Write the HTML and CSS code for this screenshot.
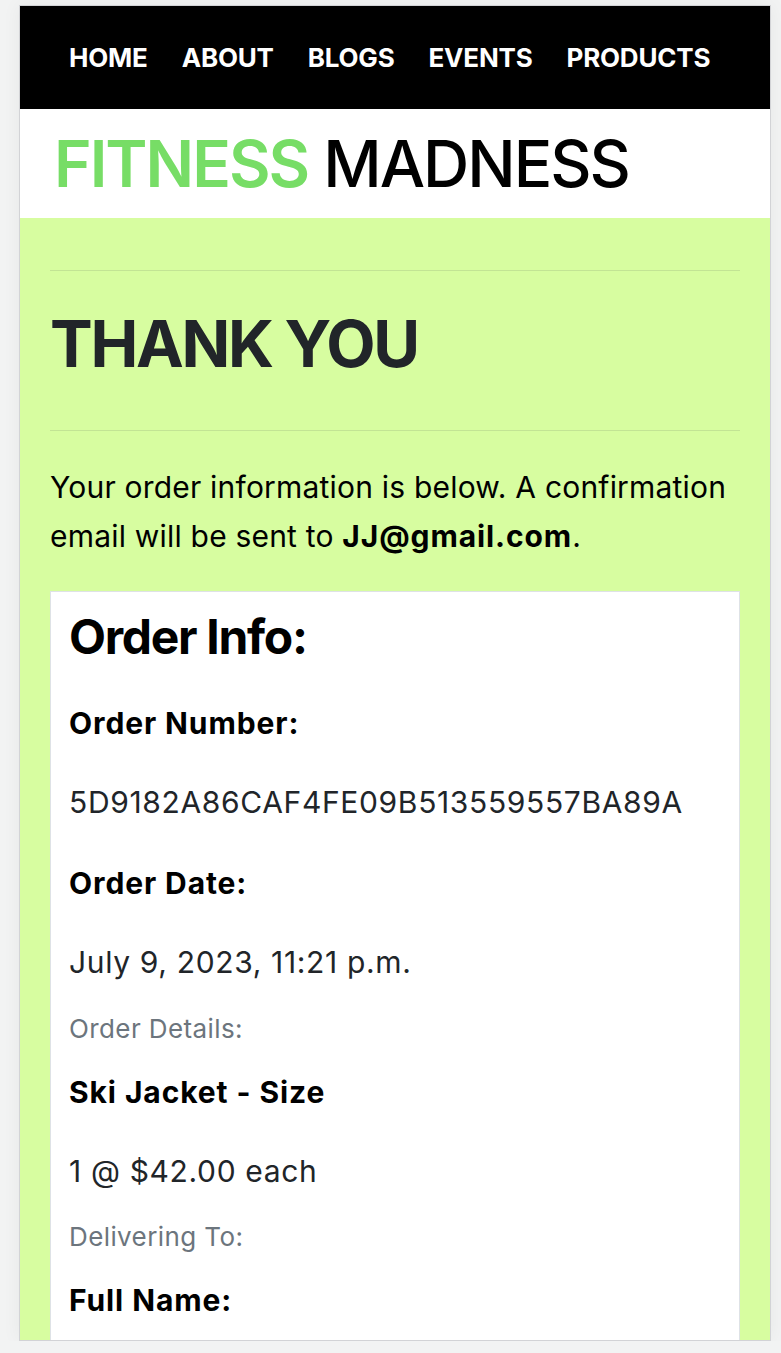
FILE: index.html
```html
<!DOCTYPE html>
<html lang="en">
<head>
<meta charset="utf-8">
<title>Fitness Madness - Thank You</title>
<link rel="stylesheet" href="styles.css">
</head>
<body>
<div class="device">
  <nav class="topnav">
    <a href="#">HOME</a>
    <a href="#">ABOUT</a>
    <a href="#">BLOGS</a>
    <a href="#">EVENTS</a>
    <a href="#">PRODUCTS</a>
  </nav>
  <header class="brand">
    <h1 class="logo"><span class="logo-accent">FITNESS</span> MADNESS</h1>
  </header>
  <main class="content">
    <hr class="rule rule-top">
    <h1 class="page-title">THANK YOU</h1>
    <hr class="rule rule-bottom">
    <p class="intro">Your order information is below. A confirmation email will be sent to <strong>JJ@gmail.com</strong>.</p>
    <section class="card">
      <h2 class="card-title">Order Info:</h2>
      <h5 class="label">Order Number:</h5>
      <p class="value">5D9182A86CAF4FE09B513559557BA89A</p>
      <h5 class="label">Order Date:</h5>
      <p class="value value-end">July 9, 2023, 11:21 p.m.</p>
      <p class="muted">Order Details:</p>
      <h5 class="label">Ski Jacket - Size</h5>
      <p class="value value-end">1 @ $42.00 each</p>
      <p class="muted">Delivering To:</p>
      <h5 class="label">Full Name:</h5>
    </section>
  </main>
</div>
</body>
</html>
```
FILE: styles.css
```css
* { box-sizing: border-box; }

html, body {
  margin: 0;
  padding: 0;
}

body {
  background: #f2f3f3;
  font-family: Inter, "Noto Sans", "Liberation Sans", sans-serif;
  color: #000;
}

.device {
  margin: 5px 0 0 19px;
  width: 752px;
  height: 1336px;
  border: 1px solid #d2d3d6;
  overflow: hidden;
  background: #d7fda0;
  box-shadow: 0 0 18px rgba(0, 0, 0, 0.05);
}

.topnav {
  height: 103px;
  background: #000;
  display: flex;
  align-items: center;
  padding-left: 49px;
  gap: 34px;
}

.topnav a {
  color: #fff;
  text-decoration: none;
  font-weight: 700;
  font-size: 26px;
  line-height: 1;
  letter-spacing: -0.2px;
}

.brand {
  height: 109px;
  background: #fff;
  display: flex;
  align-items: center;
  padding-left: 34px;
}

.logo {
  margin: 0;
  font-size: 64px;
  line-height: 1;
  font-weight: 500;
  color: #000;
  letter-spacing: -2px;
}

.logo-accent {
  color: #77dd66;
  font-weight: 600;
}

.content {
  padding: 0 30px;
}

.rule {
  border: 0;
  border-top: 1px solid #c2e494;
  margin: 0;
}

.rule-top { margin-top: 52px; }

.page-title {
  margin: 34px 0 48px;
  font-size: 64px;
  line-height: 77px;
  font-weight: 700;
  color: #212529;
  letter-spacing: -2.3px;
}

.intro {
  margin: 32px 0 31px;
  font-size: 30px;
  line-height: 48.5px;
  letter-spacing: 0.2px;
  color: #000;
}

.intro strong {
  font-weight: 700;
  letter-spacing: 0.9px;
}

.card {
  background: #fff;
  border: 1px solid #dee2e6;
  padding: 16px 18px 0;
  min-height: 760px;
}

.card-title {
  margin: 0 0 40px;
  font-size: 48px;
  line-height: 57.6px;
  font-weight: 700;
  color: #000;
  letter-spacing: -1.3px;
}

.label {
  margin: 0 0 40px;
  font-size: 30px;
  line-height: 35px;
  font-weight: 700;
  letter-spacing: 0.9px;
  color: #000;
}

.value {
  margin: 0 0 42px;
  font-size: 30px;
  line-height: 43.5px;
  letter-spacing: 0.65px;
  color: #212529;
}

.value-end { margin-bottom: 24px; }

.muted {
  margin: 0 0 27px;
  font-size: 26px;
  line-height: 39px;
  letter-spacing: 0.4px;
  color: #6c757d;
}
```
